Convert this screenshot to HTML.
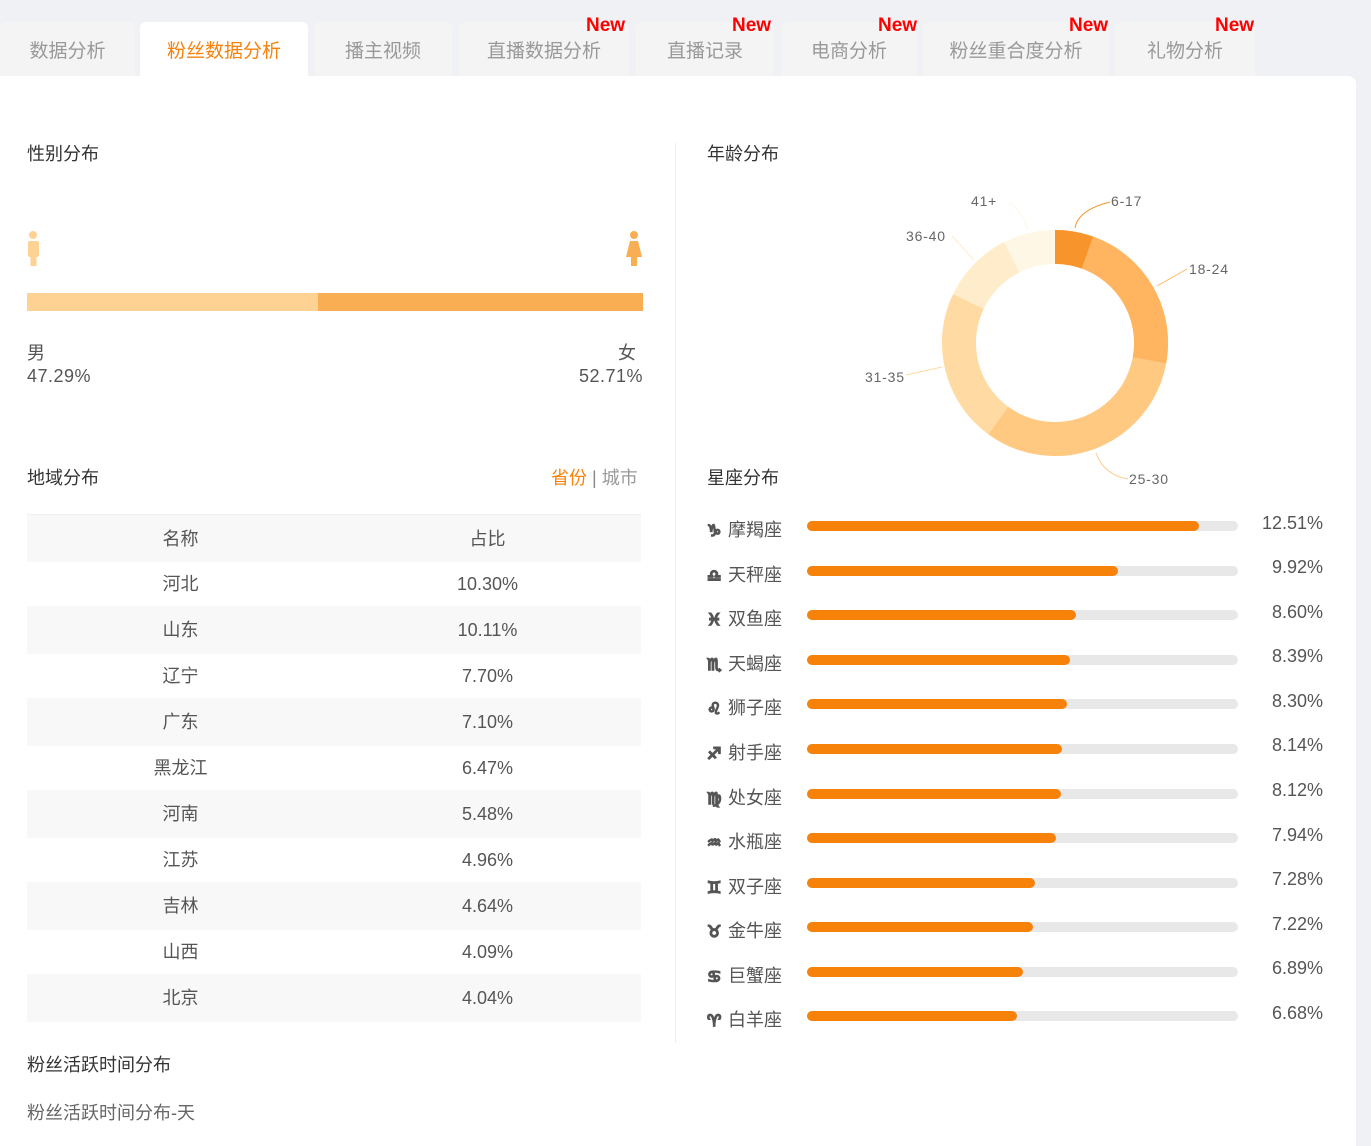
<!DOCTYPE html>
<html><head><meta charset="utf-8"><style>
*{margin:0;padding:0;box-sizing:border-box}
body{width:1371px;height:1140px;background:#f0f1f5;position:relative;overflow:hidden;font-family:"Liberation Sans","Noto Sans CJK SC",sans-serif;color:#333}
.a{position:absolute;white-space:nowrap}
.tab{position:absolute;top:22px;height:54px;background:#f4f4f5;border-radius:6px 6px 0 0;color:#999;font-size:19px;text-align:center;line-height:60px}
.tab.on{background:#fff;color:#f7820a}
.new{position:absolute;top:15px;color:#f00;font-weight:bold;font-size:19px;font-family:"Liberation Sans",sans-serif}
.panel{position:absolute;left:0;top:76px;width:1356px;height:1070px;background:#fff;border-radius:0 8px 0 0}
.t{font-size:18px;color:#333}
.row{position:absolute;left:27px;width:614px;font-size:18px;color:#555}
.row span{position:absolute;width:307px;text-align:center;top:0}
.g{background:#f8f8f8}
.zl{position:absolute;left:707px;font-size:18px;color:#555}
.zl b{font-family:"DejaVu Sans",sans-serif;font-size:16px;font-weight:bold;color:#555;display:inline-block;width:21px;-webkit-text-stroke:1.6px #555}
.tr{position:absolute;left:807px;width:431px;height:10px;background:#e8e8e8;border-radius:5px}
.tr i{position:absolute;left:0;top:0;height:10px;background:#f7820a;border-radius:5px}
.pc{position:absolute;right:48px;font-size:18px;color:#555}
.lb{font-size:14px;fill:#666;font-family:"Liberation Sans",sans-serif;letter-spacing:0.8px}
</style></head><body>
<div class="tab" style="left:0;width:135px">数据分析</div>
<div class="tab on" style="left:140px;width:168px">粉丝数据分析</div>
<div class="tab" style="left:314px;width:138px">播主视频</div>
<div class="tab" style="left:459px;width:170px">直播数据分析</div>
<div class="tab" style="left:636px;width:138px">直播记录</div>
<div class="tab" style="left:781px;width:136px">电商分析</div>
<div class="tab" style="left:923px;width:186px">粉丝重合度分析</div>
<div class="tab" style="left:1115px;width:140px">礼物分析</div>
<div class="new" style="left:586px">New</div>
<div class="new" style="left:732px">New</div>
<div class="new" style="left:878px">New</div>
<div class="new" style="left:1069px">New</div>
<div class="new" style="left:1215px">New</div>
<div class="panel"></div>
<div class="a" style="left:675px;top:143px;width:1px;height:900px;background:#eee"></div>
<div class="a t" style="left:27px;top:140px">性别分布</div>
<div class="a t" style="left:707px;top:140px">年龄分布</div>
<svg class="a" style="left:0;top:0" width="700" height="300">
<circle cx="33" cy="235" r="4" fill="#fed292"/><rect x="28" y="241" width="11" height="16" rx="2" fill="#fed292"/><rect x="30.5" y="255" width="6" height="11" fill="#fed292"/>
<circle cx="634" cy="235" r="4" fill="#f9ae54"/><path d="M630 241h8l4 16h-16z" fill="#f9ae54"/><rect x="631" y="255" width="6" height="11" fill="#f9ae54"/>
</svg>
<div class="a" style="left:27px;top:293px;width:291px;height:18px;background:#fed292"></div>
<div class="a" style="left:318px;top:293px;width:325px;height:18px;background:#f9ae54"></div>
<div class="a" style="left:27px;top:339px;font-size:18px;color:#555">男</div>
<div class="a" style="left:27px;top:366px;font-size:18px;color:#555;letter-spacing:0.5px">47.29%</div>
<div class="a" style="left:618px;top:339px;font-size:18px;color:#555">女</div>
<div class="a" style="right:728px;top:366px;font-size:18px;color:#555;letter-spacing:0.5px">52.71%</div>
<svg class="a" style="left:0;top:0" width="1371" height="520">
<g transform="rotate(-90 1055 343)" fill="none" stroke-width="34">
<circle cx="1055" cy="343" r="96" stroke="#fff7e6"/>
<circle cx="1055" cy="343" r="96" stroke="#ffeccb" stroke-dasharray="558 1000"/>
<circle cx="1055" cy="343" r="96" stroke="#ffdba3" stroke-dasharray="495 1000"/>
<circle cx="1055" cy="343" r="96" stroke="#ffc982" stroke-dasharray="362 1000"/>
<circle cx="1055" cy="343" r="96" stroke="#ffb560" stroke-dasharray="168 1000"/>
<circle cx="1055" cy="343" r="96" stroke="#f7952c" stroke-dasharray="33 1000"/>
</g>
<circle cx="1055" cy="343" r="79" fill="#fff"/>
<path d="M1075 228q3-18 35-26" stroke="#f7952c" fill="none"/>
<path d="M1157 286l30-17" stroke="#ffb560" fill="none"/>
<path d="M1096 453q8 22 32 26" stroke="#ffc982" fill="none"/>
<path d="M942 367l-36 8" stroke="#ffdba3" fill="none"/>
<path d="M974 260l-22-24" stroke="#ffeccb" fill="none"/>
<path d="M1028 230q-5-18-19-28" stroke="#fff7e6" fill="none"/>
<text class="lb" x="971" y="206">41+</text>
<text class="lb" x="1111" y="206">6-17</text>
<text class="lb" x="1189" y="274">18-24</text>
<text class="lb" x="906" y="241">36-40</text>
<text class="lb" x="865" y="382">31-35</text>
<text class="lb" x="1129" y="484">25-30</text>
</svg>
<div class="a t" style="left:27px;top:464px">地域分布</div>
<div class="a" style="left:551px;top:464px;font-size:18px;color:#f7820a">省份 <span style="color:#888">|</span> <span style="color:#999">城市</span></div>
<div class="a t" style="left:707px;top:464px">星座分布</div>
<div class="row g" style="top:514px;height:48px;line-height:48px;border-top:1px solid #f0f0f0"><span style="left:0">名称</span><span style="left:307px">占比</span></div>
<div class="row" style="top:562px;height:44px;line-height:44px"><span style="left:0">河北</span><span style="left:307px">10.30%</span></div>
<div class="row g" style="top:606px;height:48px;line-height:48px"><span style="left:0">山东</span><span style="left:307px">10.11%</span></div>
<div class="row" style="top:654px;height:44px;line-height:44px"><span style="left:0">辽宁</span><span style="left:307px">7.70%</span></div>
<div class="row g" style="top:698px;height:48px;line-height:48px"><span style="left:0">广东</span><span style="left:307px">7.10%</span></div>
<div class="row" style="top:746px;height:44px;line-height:44px"><span style="left:0">黑龙江</span><span style="left:307px">6.47%</span></div>
<div class="row g" style="top:790px;height:48px;line-height:48px"><span style="left:0">河南</span><span style="left:307px">5.48%</span></div>
<div class="row" style="top:838px;height:44px;line-height:44px"><span style="left:0">江苏</span><span style="left:307px">4.96%</span></div>
<div class="row g" style="top:882px;height:48px;line-height:48px"><span style="left:0">吉林</span><span style="left:307px">4.64%</span></div>
<div class="row" style="top:930px;height:44px;line-height:44px"><span style="left:0">山西</span><span style="left:307px">4.09%</span></div>
<div class="row g" style="top:974px;height:48px;line-height:48px"><span style="left:0">北京</span><span style="left:307px">4.04%</span></div>

<div class="zl" style="top:516px"><b>♑&#xFE0E;</b>摩羯座</div><div class="tr" style="top:521px"><i style="width:392px"></i></div><div class="pc" style="top:513px">12.51%</div>
<div class="zl" style="top:561px"><b>♎&#xFE0E;</b>天秤座</div><div class="tr" style="top:566px"><i style="width:311px"></i></div><div class="pc" style="top:557px">9.92%</div>
<div class="zl" style="top:605px"><b>♓&#xFE0E;</b>双鱼座</div><div class="tr" style="top:610px"><i style="width:269px"></i></div><div class="pc" style="top:602px">8.60%</div>
<div class="zl" style="top:650px"><b>♏&#xFE0E;</b>天蝎座</div><div class="tr" style="top:655px"><i style="width:263px"></i></div><div class="pc" style="top:646px">8.39%</div>
<div class="zl" style="top:694px"><b>♌&#xFE0E;</b>狮子座</div><div class="tr" style="top:699px"><i style="width:260px"></i></div><div class="pc" style="top:691px">8.30%</div>
<div class="zl" style="top:739px"><b>♐&#xFE0E;</b>射手座</div><div class="tr" style="top:744px"><i style="width:255px"></i></div><div class="pc" style="top:735px">8.14%</div>
<div class="zl" style="top:784px"><b>♍&#xFE0E;</b>处女座</div><div class="tr" style="top:789px"><i style="width:254px"></i></div><div class="pc" style="top:780px">8.12%</div>
<div class="zl" style="top:828px"><b>♒&#xFE0E;</b>水瓶座</div><div class="tr" style="top:833px"><i style="width:249px"></i></div><div class="pc" style="top:825px">7.94%</div>
<div class="zl" style="top:873px"><b>♊&#xFE0E;</b>双子座</div><div class="tr" style="top:878px"><i style="width:228px"></i></div><div class="pc" style="top:869px">7.28%</div>
<div class="zl" style="top:917px"><b>♉&#xFE0E;</b>金牛座</div><div class="tr" style="top:922px"><i style="width:226px"></i></div><div class="pc" style="top:914px">7.22%</div>
<div class="zl" style="top:962px"><b>♋&#xFE0E;</b>巨蟹座</div><div class="tr" style="top:967px"><i style="width:216px"></i></div><div class="pc" style="top:958px">6.89%</div>
<div class="zl" style="top:1006px"><b>♈&#xFE0E;</b>白羊座</div><div class="tr" style="top:1011px"><i style="width:210px"></i></div><div class="pc" style="top:1003px">6.68%</div>

<div class="a t" style="left:27px;top:1051px">粉丝活跃时间分布</div>
<div class="a" style="left:27px;top:1099px;font-size:18px;color:#666">粉丝活跃时间分布-天</div>
</body></html>
